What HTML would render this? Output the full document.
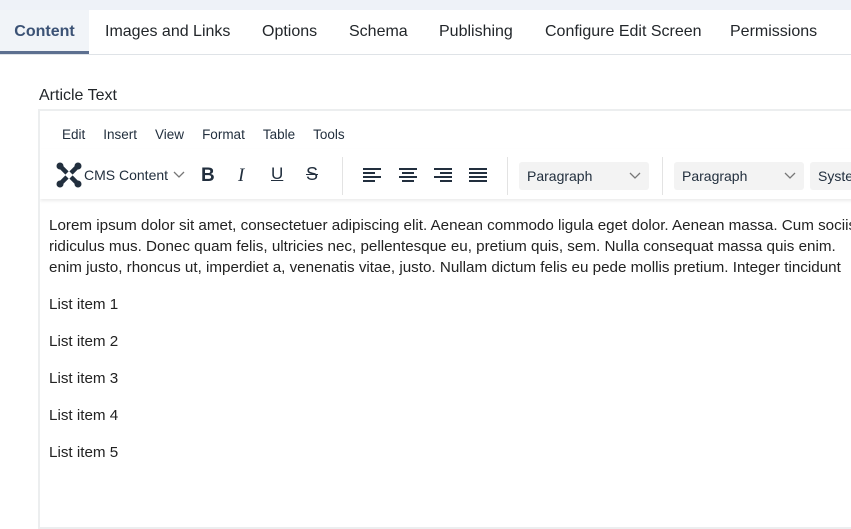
<!DOCTYPE html><html><head><style>
*{margin:0;padding:0;box-sizing:border-box}
body{width:851px;height:503px;overflow:hidden;background:#fff;font-family:"Liberation Sans",sans-serif;color:#22262a;position:relative}
.top{position:absolute;left:0;top:0;width:851px;height:10px;background:#eef2f8}
.tabs{position:absolute;left:0;top:10px;width:851px;height:45px;border-bottom:1px solid #dfe3e7;white-space:nowrap}
.tab{position:absolute;top:0;height:44px;line-height:43px;font-size:16px;color:#22262a}
.tab.act{background:#f1f4f8;color:#3b5275;font-weight:bold;border-bottom:3px solid #5d7090;left:0;width:89px;text-align:center;height:44px}
.lbl{position:absolute;left:39px;top:87px;font-size:16px;color:#22262a}
.ed{position:absolute;left:38px;top:109px;width:830px;height:420px;border:2px solid #eceeef;overflow:hidden}
.menu{position:absolute;left:22px;top:16px;font-size:13.5px;color:#222f3e}
.menu span{margin-right:18px}
.tb{position:absolute;left:0;top:38px;width:830px;height:50px;box-shadow:0 2px 3px rgba(0,0,0,.08)}
.sep{position:absolute;top:8px;width:1px;height:38px;background:#e3e3e3}
.sel{position:absolute;top:13px;height:28px;background:#f3f3f3;border-radius:3px;font-size:14px;line-height:28px;padding-left:8px;color:#222f3e}
.ic{position:absolute;top:18px}
.c{position:absolute;left:9px;top:104px;font-size:15.2px;line-height:21px;color:#222;white-space:nowrap}
.c p{margin-bottom:16px}
</style></head><body>
<div class="top"></div>
<div class="tabs">
<div class="tab act">Content</div>
<div class="tab" style="left:105px">Images and Links</div>
<div class="tab" style="left:262px">Options</div>
<div class="tab" style="left:349px">Schema</div>
<div class="tab" style="left:439px">Publishing</div>
<div class="tab" style="left:545px">Configure Edit Screen</div>
<div class="tab" style="left:730px">Permissions</div>
</div>
<div class="lbl">Article Text</div>
<div class="ed">
<div class="menu"><span>Edit</span><span>Insert</span><span>View</span><span>Format</span><span>Table</span><span>Tools</span></div>
<div class="tb">
<svg class="ic" style="left:16px;top:13px" width="26" height="26" viewBox="0 0 26 26"><g stroke="#222f3e" stroke-width="4.5" stroke-linecap="round" fill="none"><path d="M5 5 L21 21 M21 5 L5 21"/></g><g fill="#222f3e"><circle cx="4" cy="4" r="3.5"/><circle cx="22" cy="4" r="3.5"/><circle cx="4" cy="22" r="3.5"/><circle cx="22" cy="22" r="3.5"/></g><path d="M9 13 L13 9 L17 13 L13 17Z" fill="#fff"/></svg>
<div style="position:absolute;left:44px;top:18px;font-size:14px;color:#222f3e">CMS Content</div>
<svg class="ic" style="left:133px;top:22px" width="12" height="8"><path d="M1 1 L6 6 L11 1" stroke="#777" stroke-width="1.3" fill="none"/></svg>
<div style="position:absolute;left:161px;top:16px;font-size:19px;font-weight:bold;color:#222f3e">B</div>
<div style="position:absolute;left:198px;top:16px;font-size:19px;font-style:italic;font-family:'Liberation Serif';color:#222f3e">I</div>
<div style="position:absolute;left:231px;top:15px;font-size:17px;text-decoration:underline;color:#222f3e">U</div>
<div style="position:absolute;left:266px;top:15px;font-size:18px;text-decoration:line-through;color:#222f3e">S</div>
<div class="sep" style="left:302px"></div>
<svg class="ic" style="left:323px" width="160" height="16"><g fill="#222f3e"><rect x="0" y="1" width="18" height="2"/><rect x="0" y="5" width="12" height="2"/><rect x="0" y="9" width="18" height="2"/><rect x="0" y="13" width="12" height="2"/>
<rect x="36" y="1" width="18" height="2"/><rect x="39" y="5" width="12" height="2"/><rect x="36" y="9" width="18" height="2"/><rect x="39" y="13" width="12" height="2"/>
<rect x="71" y="1" width="18" height="2"/><rect x="77" y="5" width="12" height="2"/><rect x="71" y="9" width="18" height="2"/><rect x="77" y="13" width="12" height="2"/>
<rect x="106" y="1" width="18" height="2"/><rect x="106" y="5" width="18" height="2"/><rect x="106" y="9" width="18" height="2"/><rect x="106" y="13" width="18" height="2"/></g></svg>
<div class="sep" style="left:467px"></div>
<div class="sel" style="left:479px;width:130px">Paragraph<svg style="position:absolute;right:8px;top:10px" width="12" height="8"><path d="M1 1 L6 6 L11 1" stroke="#777" stroke-width="1.3" fill="none"/></svg></div>
<div class="sep" style="left:622px"></div>
<div class="sel" style="left:634px;width:130px">Paragraph<svg style="position:absolute;right:8px;top:10px" width="12" height="8"><path d="M1 1 L6 6 L11 1" stroke="#777" stroke-width="1.3" fill="none"/></svg></div>
<div class="sel" style="left:770px;width:80px">System</div>
</div>
<div class="c">
<p>Lorem ipsum dolor sit amet, consectetuer adipiscing elit. Aenean commodo ligula eget dolor. Aenean massa. Cum sociis<br>ridiculus mus. Donec quam felis, ultricies nec, pellentesque eu, pretium quis, sem. Nulla consequat massa quis enim.<br>enim justo, rhoncus ut, imperdiet a, venenatis vitae, justo. Nullam dictum felis eu pede mollis pretium. Integer tincidunt</p>
<p>List item 1</p><p>List item 2</p><p>List item 3</p><p>List item 4</p><p>List item 5</p>
</div>
</div>
</body></html>
